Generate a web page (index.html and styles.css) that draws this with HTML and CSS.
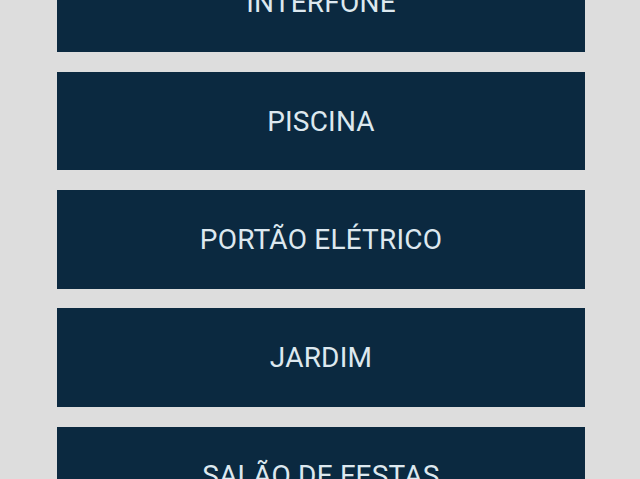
FILE: index.html
```html
<!DOCTYPE html>
<html lang="pt-BR">
<head>
    <meta charset="UTF-8">
    <meta name="viewport" content="width=device-width, initial-scale=1.0">
    <title>Áreas do Condomínio</title>
    <link rel="stylesheet" href="styles.css">
</head>
<body>

    <div class="lista">
        <button class="item">INTERFONE</button>
        <button class="item">PISCINA</button>
        <button class="item">PORTÃO ELÉTRICO</button>
        <button class="item">JARDIM</button>
        <button class="item">SALÃO DE FESTAS</button>
    </div>

</body>
</html>
```

FILE: styles.css
```css
body {
    margin: 0;
    background: #dddddd;
    font-family: Roboto, "Liberation Sans", sans-serif;
    overflow: hidden;
}
.lista {
    display: flex;
    flex-direction: column;
    gap: 19.8px;
    margin: -46.5px 55px 0 57px;
}
.item {
    height: 98.5px;
    border: none;
    background: #0b2940;
    color: #dde8ef;
    font-family: Roboto, "Liberation Sans", sans-serif;
    font-size: 28px;
    letter-spacing: 0.2px;
    padding: 0;
    cursor: pointer;
}
```
